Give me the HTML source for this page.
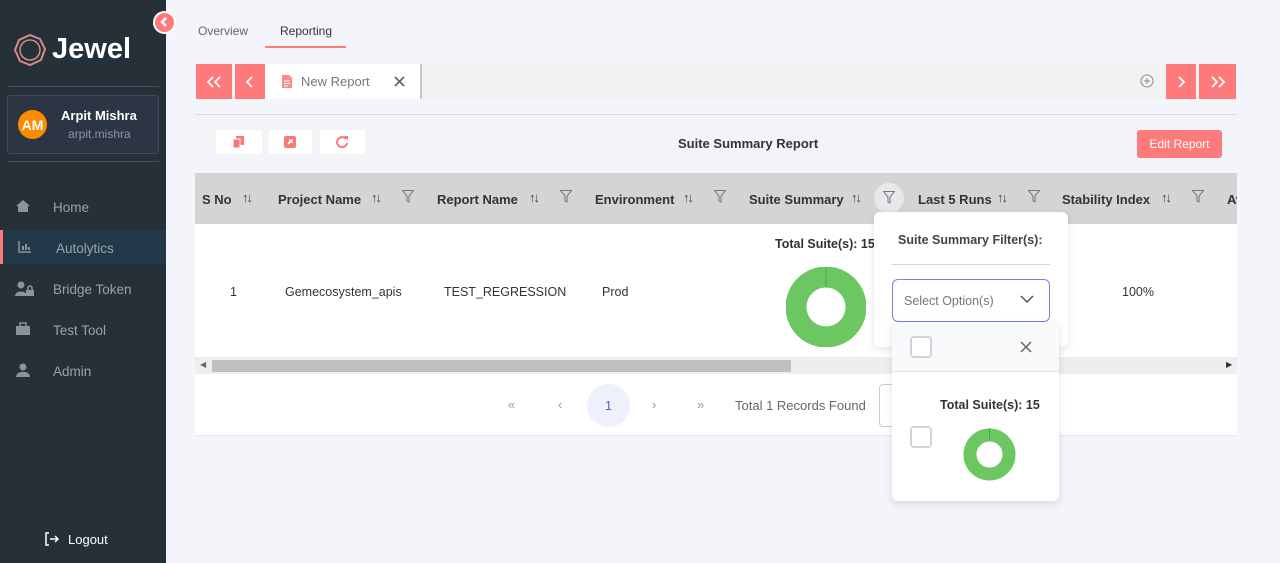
<!DOCTYPE html>
<html><head><meta charset="utf-8"><style>
*{box-sizing:border-box;margin:0;padding:0}
body{width:1280px;height:563px;overflow:hidden;background:#f4f5fa;font-family:"Liberation Sans",sans-serif;position:relative}
.a{position:absolute}
.sb{left:0;top:0;width:166px;height:563px;background:#263038}
.mi{position:absolute;left:53px;font-size:13.5px;color:#9aa3a8}
.hd{font-size:13px;font-weight:bold;color:#333;top:192px;position:absolute}
.srt{position:absolute;top:190px;font-size:13px;color:#444;letter-spacing:-2px}
.flt{position:absolute;top:190px}
.rb{background:#ff7b7b;position:absolute;display:flex;align-items:center;justify-content:center}
.td{position:absolute;top:285px;font-size:12.5px;color:#333}
.pg{position:absolute;top:397px;font-size:13px;color:#999}
.cb{position:absolute;width:22px;height:22px;border:2px solid #d0d3d9;border-radius:4px;background:#fff}
</style></head><body>
<div class="a sb"></div>
<div class="a" style="left:153px;top:11px;width:23px;height:23px;border-radius:50%;background:#ff7b7b;border:2px solid #fff"></div>
<svg class="a" style="left:158px;top:15px" width="12" height="14"><path d="M8 3 L4 7 L8 11" stroke="#fff" stroke-width="2.4" fill="none"/></svg>
<svg class="a" style="left:13px;top:33px" width="34" height="34" viewBox="0 0 34 34"><polygon points="17,2 27,6 32,16 28,27 17,32 7,28 2,17 6,7" fill="none" stroke="#d98a8a" stroke-width="2"/><circle cx="17" cy="17" r="10" fill="none" stroke="#d98a8a" stroke-width="1.5"/></svg>
<div class="a" style="left:52px;top:33px;font-size:29px;font-weight:bold;color:#fff">Jewel</div>
<div class="a" style="left:8px;top:86px;width:151px;height:1px;background:#46505a"></div>
<div class="a" style="left:7px;top:95px;width:152px;height:59px;background:#2b3543;border:1px solid #3f4a58;border-radius:3px"></div>
<div class="a" style="left:18px;top:110px;width:29px;height:29px;border-radius:50%;background:#fb8c00;color:#fff;font-size:14px;font-weight:bold;display:flex;align-items:center;justify-content:center">AM</div>
<div class="a" style="left:61px;top:108px;font-size:13px;font-weight:bold;color:#fff">Arpit Mishra</div>
<div class="a" style="left:68px;top:127px;font-size:12px;color:#8a96a8">arpit.mishra</div>
<div class="a" style="left:8px;top:161px;width:151px;height:1px;background:#46505a"></div>
<div class="a" style="left:0;top:230px;width:166px;height:34px;background:#22394a"></div>
<div class="a" style="left:0;top:230px;width:3px;height:34px;background:#ff7b7b"></div>
<svg class="a" style="left:15px;top:199px" width="16" height="14"><path d="M1 7 L8 1 L15 7 H13 V13 H3 V7Z" fill="#8a949b"/></svg>
<div class="mi" style="top:200px">Home</div>
<svg class="a" style="left:18px;top:241px" width="14" height="12"><path d="M1 0V11H13" stroke="#8a949b" stroke-width="1.5" fill="none"/><rect x="4" y="5" width="2" height="4" fill="#8a949b"/><rect x="7" y="3" width="2" height="6" fill="#8a949b"/><rect x="10" y="6" width="2" height="3" fill="#8a949b"/></svg>
<div class="mi" style="top:241px;left:56px">Autolytics</div>
<svg class="a" style="left:15px;top:281px" width="20" height="16"><circle cx="6" cy="4" r="3.5" fill="#8a949b"/><path d="M0 15 C0 9 12 9 12 15Z" fill="#8a949b"/><rect x="11" y="9" width="8" height="6" fill="#8a949b"/><path d="M13 9V7a2 2 0 0 1 4 0v2" stroke="#8a949b" fill="none" stroke-width="1.5"/></svg>
<div class="mi" style="top:282px">Bridge Token</div>
<svg class="a" style="left:15px;top:322px" width="16" height="14"><rect x="1" y="4" width="14" height="9" fill="#8a949b"/><rect x="5" y="1" width="6" height="4" fill="none" stroke="#8a949b" stroke-width="1.5"/></svg>
<div class="mi" style="top:323px">Test Tool</div>
<svg class="a" style="left:16px;top:363px" width="14" height="15"><circle cx="7" cy="4" r="3.5" fill="#8a949b"/><path d="M0 14 C0 7 14 7 14 14Z" fill="#8a949b"/></svg>
<div class="mi" style="top:364px">Admin</div>
<svg class="a" style="left:44px;top:532px" width="16" height="14"><path d="M5 1H2V13H5" stroke="#fff" stroke-width="1.5" fill="none"/><path d="M6 7H14M11 4L14 7L11 10" stroke="#fff" stroke-width="1.5" fill="none"/></svg>
<div class="a" style="left:68px;top:532px;font-size:13px;color:#fff">Logout</div>

<div class="a" style="left:198px;top:24px;font-size:12px;color:#666">Overview</div>
<div class="a" style="left:280px;top:24px;font-size:12px;color:#333">Reporting</div>
<div class="a" style="left:265px;top:46px;width:81px;height:2px;background:#ff7b7b"></div>

<div class="a" style="left:196px;top:64px;width:1040px;height:35px;background:#f2f2f2"></div>
<div class="rb" style="left:196px;top:64px;width:36px;height:35px"><svg width="18" height="12"><path d="M8 1L3 6L8 11M15 1L10 6L15 11" stroke="#fff" stroke-width="1.8" fill="none"/></svg></div>
<div class="rb" style="left:235px;top:64px;width:30px;height:35px"><svg width="10" height="12"><path d="M7 1L2 6L7 11" stroke="#fff" stroke-width="1.8" fill="none"/></svg></div>
<div class="a" style="left:265px;top:64px;width:157px;height:35px;background:#fff;border-right:2px solid #c8c8c8"></div>
<svg class="a" style="left:281px;top:74px" width="12" height="15"><path d="M1 1H8L11 4V14H1Z" fill="#ff8a8a"/><path d="M3 7H9M3 9.5H9M3 12H7" stroke="#fff"/></svg>
<div class="a" style="left:301px;top:74px;font-size:13px;color:#777">New Report</div>
<svg class="a" style="left:394px;top:76px" width="11" height="11"><path d="M1 1L10 10M10 1L1 10" stroke="#666" stroke-width="1.8"/></svg>
<svg class="a" style="left:1140px;top:74px" width="14" height="14"><circle cx="7" cy="7" r="6" fill="none" stroke="#888"/><path d="M7 4V10M4 7H10" stroke="#888"/></svg>
<div class="rb" style="left:1166px;top:64px;width:30px;height:35px"><svg width="10" height="12"><path d="M3 1L8 6L3 11" stroke="#fff" stroke-width="1.8" fill="none"/></svg></div>
<div class="rb" style="left:1199px;top:64px;width:37px;height:35px"><svg width="18" height="12"><path d="M3 1L8 6L3 11M10 1L15 6L10 11" stroke="#fff" stroke-width="1.8" fill="none"/></svg></div>

<div class="a" style="left:195px;top:114px;width:1042px;height:1px;background:#dcdcdc"></div>
<div class="a" style="left:195px;top:115px;width:1042px;height:58px;background:#f3f4f8"></div>
<div class="a" style="left:216px;top:130px;width:46px;height:24px;background:#fff;border-radius:2px"></div>
<div class="a" style="left:269px;top:130px;width:43px;height:24px;background:#fff;border-radius:2px"></div>
<div class="a" style="left:320px;top:130px;width:45px;height:24px;background:#fff;border-radius:2px"></div>
<svg class="a" style="left:232px;top:136px" width="14" height="13"><rect x="4" y="0" width="8" height="9" fill="#f77"/><rect x="1" y="3" width="7" height="9" fill="#f77" stroke="#fff"/></svg>
<svg class="a" style="left:284px;top:136px" width="12" height="12"><rect width="12" height="12" rx="2" fill="#f77"/><path d="M4 8L8 4M5 4H8V7" stroke="#fff" stroke-width="1.4" fill="none"/></svg>
<svg class="a" style="left:336px;top:135px" width="13" height="13"><path d="M10 4A5 5 0 1 0 11 8" stroke="#f77" stroke-width="2" fill="none"/><path d="M8 1H12V5Z" fill="#f77"/></svg>
<div class="a" style="left:678px;top:136px;font-size:13px;font-weight:bold;color:#333">Suite Summary Report</div>
<div class="a" style="left:1137px;top:130px;width:85px;height:28px;background:#ff7b7b;border-radius:3px;color:#fff;font-size:12px;display:flex;align-items:center;justify-content:center">Edit Report</div>

<div class="a" style="left:195px;top:173px;width:1042px;height:51px;background:#d4d4d4"></div>
<div class="hd" style="left:202px">S No</div><div class="srt" style="left:242px">↑↓</div>
<div class="hd" style="left:278px">Project Name</div><div class="srt" style="left:371px">↑↓</div>
<div class="hd" style="left:437px">Report Name</div><div class="srt" style="left:529px">↑↓</div>
<div class="hd" style="left:595px">Environment</div><div class="srt" style="left:683px">↑↓</div>
<div class="hd" style="left:749px">Suite Summary</div><div class="srt" style="left:851px">↑↓</div>
<div class="hd" style="left:918px">Last 5 Runs</div><div class="srt" style="left:997px">↑↓</div>
<div class="hd" style="left:1062px">Stability Index</div><div class="srt" style="left:1161px">↑↓</div>
<div class="hd" style="left:1227px;width:10px;overflow:hidden">Av</div>
<div class="a" style="left:874px;top:183px;width:30px;height:30px;border-radius:50%;background:#e6e8ec"></div>
<svg class="flt" style="left:402px" width="12" height="13"><path d="M0.5 0.5H11.5L7 6V12L5 11V6Z" fill="none" stroke="#777"/></svg>
<svg class="flt" style="left:560px" width="12" height="13"><path d="M0.5 0.5H11.5L7 6V12L5 11V6Z" fill="none" stroke="#777"/></svg>
<svg class="flt" style="left:714px" width="12" height="13"><path d="M0.5 0.5H11.5L7 6V12L5 11V6Z" fill="none" stroke="#777"/></svg>
<svg class="flt" style="left:883px;top:191px" width="12" height="13"><path d="M0.5 0.5H11.5L7 6V12L5 11V6Z" fill="none" stroke="#777"/></svg>
<svg class="flt" style="left:1028px" width="12" height="13"><path d="M0.5 0.5H11.5L7 6V12L5 11V6Z" fill="none" stroke="#777"/></svg>
<svg class="flt" style="left:1192px" width="12" height="13"><path d="M0.5 0.5H11.5L7 6V12L5 11V6Z" fill="none" stroke="#777"/></svg>

<div class="a" style="left:195px;top:224px;width:1042px;height:133px;background:#fff"></div>
<div class="td" style="left:230px">1</div>
<div class="td" style="left:285px">Gemecosystem_apis</div>
<div class="td" style="left:444px">TEST_REGRESSION</div>
<div class="td" style="left:602px">Prod</div>
<div class="td" style="left:1122px">100%</div>
<div class="a" style="left:775px;top:237px;font-size:12.5px;font-weight:bold;color:#333">Total Suite(s): 15</div>
<svg class="a" style="left:786px;top:267px" width="80" height="80"><circle cx="40" cy="40" r="30" fill="none" stroke="#6cc763" stroke-width="21"/><path d="M40 0V20" stroke="#4aa840"/></svg>

<div class="a" style="left:195px;top:357px;width:1042px;height:17px;background:#eee"></div>
<div class="a" style="left:212px;top:360px;width:579px;height:12px;background:#c0c0c0"></div>
<div class="a" style="left:200px;top:360px;font-size:8px;color:#666">◀</div>
<div class="a" style="left:1226px;top:360px;font-size:8px;color:#333">▶</div>
<div class="a" style="left:195px;top:374px;width:1042px;height:62px;background:#fff;border-bottom:1px solid #e6e6e6"></div>
<div class="pg" style="left:508px">«</div>
<div class="pg" style="left:558px">‹</div>
<div class="a" style="left:587px;top:384px;width:43px;height:43px;border-radius:50%;background:#eef0fb;color:#6a5acd;font-size:13px;display:flex;align-items:center;justify-content:center">1</div>
<div class="pg" style="left:652px">›</div>
<div class="pg" style="left:697px">»</div>
<div class="a" style="left:735px;top:398px;font-size:13px;color:#666">Total 1 Records Found</div>
<div class="a" style="left:879px;top:384px;width:30px;height:43px;border:1px solid #ccc;border-radius:4px;background:#fff"></div>

<div class="a" style="left:874px;top:212px;width:194px;height:135px;background:#fff;border-radius:6px;box-shadow:0 2px 8px rgba(0,0,0,.12)"></div>
<div class="a" style="left:898px;top:233px;font-size:12.5px;font-weight:bold;color:#444">Suite Summary Filter(s):</div>
<div class="a" style="left:892px;top:264px;width:158px;height:1px;background:#d6d6d6"></div>
<div class="a" style="left:892px;top:279px;width:158px;height:43px;border:1.5px solid #7b7fe6;border-radius:6px;background:#fff"></div>
<div class="a" style="left:904px;top:294px;font-size:12.5px;color:#777">Select Option(s)</div>
<svg class="a" style="left:1020px;top:295px" width="14" height="9"><path d="M1 1L7 7L13 1" stroke="#555" stroke-width="1.5" fill="none"/></svg>
<div class="a" style="left:892px;top:322px;width:167px;height:179px;background:#fff;border-radius:0 0 6px 6px;box-shadow:0 3px 8px rgba(0,0,0,.12)"></div>
<div class="a" style="left:892px;top:322px;width:167px;height:50px;background:#f8f9fa;border-bottom:1px solid #dee2e6"></div>
<div class="cb" style="left:910px;top:336px"></div>
<svg class="a" style="left:1020px;top:341px" width="12" height="12"><path d="M1 1L11 11M11 1L1 11" stroke="#666" stroke-width="1.5"/></svg>
<div class="a" style="left:940px;top:398px;font-size:12.5px;font-weight:bold;color:#333">Total Suite(s): 15</div>
<div class="cb" style="left:910px;top:426px"></div>
<svg class="a" style="left:963px;top:428px" width="53" height="53"><circle cx="26.5" cy="26.5" r="19.5" fill="none" stroke="#6cc763" stroke-width="13"/><path d="M26.5 0V13" stroke="#4aa840"/></svg>
</body></html>
